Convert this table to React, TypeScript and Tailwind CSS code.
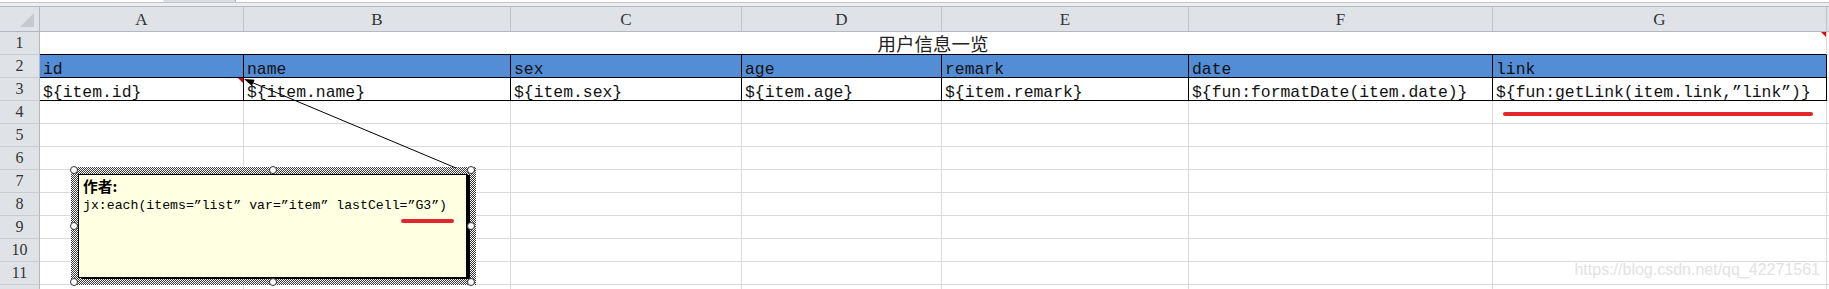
import React from "react";

const colW = [
  "w-[204px]",
  "w-[267px]",
  "w-[231px]",
  "w-[200px]",
  "w-[247px]",
  "w-[304px]",
  "w-[334px]",
];
const letters = ["A", "B", "C", "D", "E", "F", "G"];
const heads = ["id", "name", "sex", "age", "remark", "date", "link"];
const vals = [
  "${item.id}",
  "${item.name}",
  "${item.sex}",
  "${item.age}",
  "${item.remark}",
  "${fun:formatDate(item.date)}",
  "${fun:getLink(item.link,\u201Dlink\u201D)}",
];

function RowHead({ n }: { n: number }) {
  return (
    <div className="w-[40px] shrink-0 bg-[#dfe3e8] border-r border-b border-r-[#b4b8be] border-b-[#c9cdd2] flex items-center justify-center font-['Liberation_Serif',serif] text-[16px] text-[#333] leading-none">
      {n}
    </div>
  );
}

function EmptyRow({ n }: { n: number }) {
  return (
    <div className="flex h-[23px]">
      <RowHead n={n} />
      {colW.map((w, i) => (
        <div key={i} className={`${w} shrink-0 border-r border-b border-[#dadada]`} />
      ))}
      <div className="flex-1 border-b border-[#dadada]" />
    </div>
  );
}

export default function App() {
  return (
    <div className="relative w-[1829px] h-[289px] overflow-hidden bg-white font-['Liberation_Mono',monospace]">
      {/* top strip */}
      <div className="flex h-[3px] bg-white border-b border-[#c2c5ca]">
        <div className="w-[163px]" />
        <div className="w-[73px] h-[2px] bg-[#dcdee2] rounded-bl-[3px] border-r border-[#b9bdc3]" />
      </div>
      <div className="h-[4px] bg-[#eceef1] border-b border-[#b6bac0]" />

      {/* column header */}
      <div className="flex h-[25px] bg-[#dfe3e8]">
        <div className="w-[40px] shrink-0 border-r border-b border-[#b4b8be] flex items-center justify-center">
          <svg width="40" height="24" className="block">
            <polygon points="20,20 34,20 34,6" fill="#c6cace" />
          </svg>
        </div>
        {colW.map((w, i) => (
          <div
            key={i}
            className={`${w} shrink-0 border-r border-b border-r-[#bfc3c8] border-b-[#b4b8be] flex items-center justify-center font-['Liberation_Serif',serif] text-[17px] text-[#333] leading-none`}
          >
            {letters[i]}
          </div>
        ))}
        <div className="flex-1 border-b border-[#b4b8be]" />
      </div>

      {/* row 1 */}
      <div className="flex h-[23px]">
        <RowHead n={1} />
        <div className="w-[1787px] shrink-0 border-b border-r border-b-black border-r-[#dadada] flex items-center justify-center font-['Noto_Sans_CJK_SC',sans-serif] text-[18.5px] text-[#222] leading-none">
          用户信息一览
        </div>
        <div className="flex-1 border-b border-[#dadada]" />
      </div>

      {/* row 2 */}
      <div className="flex h-[23px]">
        <RowHead n={2} />
        {colW.map((w, i) => (
          <div
            key={i}
            className={`${w} shrink-0 bg-[#538dd5] border-r border-b border-black flex items-end px-[3px] text-[16.4px] leading-[15px] text-[#111] whitespace-nowrap`}
          >
            {heads[i]}
          </div>
        ))}
        <div className="flex-1 border-b border-[#dadada]" />
      </div>

      {/* row 3 */}
      <div className="flex h-[23px]">
        <RowHead n={3} />
        {colW.map((w, i) => (
          <div
            key={i}
            className={`${w} shrink-0 bg-white border-r border-b border-black flex items-end px-[3px] text-[16.4px] leading-[15px] text-[#111] whitespace-nowrap`}
          >
            {vals[i]}
          </div>
        ))}
        <div className="flex-1 border-b border-[#dadada]" />
      </div>

      {[4, 5, 6, 7, 8, 9, 10, 11].map((n) => (
        <EmptyRow key={n} n={n} />
      ))}
      <div className="flex h-[4px]">
        <div className="w-[40px] shrink-0 bg-[#dfe3e8] border-r border-[#b4b8be]" />
        {colW.map((w, i) => (
          <div key={i} className={`${w} shrink-0 border-r border-[#dadada]`} />
        ))}
      </div>

      {/* comment box */}
      <div className="absolute left-[71px] top-[167px] w-[405px] h-[118px] bg-[repeating-conic-gradient(#3a3a3a_0_25%,#ffffff_0_50%)] bg-[length:2px_2px] pl-[7px] pt-[7px]">
        <div className="w-[389px] h-[104px] bg-[#ffffe1] border border-black shadow-[3px_1px_0_#000] pl-[4px] pt-[1px]">
          <div className="font-['Noto_Sans_CJK_SC',sans-serif] font-bold text-[14.7px] leading-[20px] text-black">
            作者:
          </div>
          <div className="font-['Liberation_Mono',monospace] text-[13.2px] leading-[20px] text-black whitespace-nowrap">
            jx:each(items=”list” var=”item” lastCell=”G3”)
          </div>
        </div>
      </div>

      {/* arrow, indicators, handles */}
      <svg className="absolute left-0 top-0 pointer-events-none" width="1829" height="289">
        <line x1="456" y1="168" x2="251" y2="82" stroke="#000" strokeWidth="1" />
        <polygon points="244,79 251.9,86.1 254.6,79.7" fill="#000" />
        <polygon points="238,78 243,78 243,83" fill="#e80000" />
        <polygon points="1821,32 1826,32 1826,37" fill="#e80000" />
        {[
          [74, 170],
          [273, 170],
          [471, 170],
          [74, 226],
          [471, 226],
          [74, 282],
          [273, 282],
          [471, 282],
        ].map(([cx, cy], i) => (
          <circle key={i} cx={cx} cy={cy} r="3.5" fill="#fff" stroke="#333" strokeWidth="1" />
        ))}
      </svg>

      {/* red annotation underlines */}
      <div className="absolute left-[1503px] top-[112px] w-[310px] h-[4px] rounded-full bg-[#e3262b]" />
      <div className="absolute left-[401px] top-[219px] w-[53px] h-[4px] rounded-full bg-[#e3262b]" />

      {/* watermark */}
      <div className="absolute right-[9px] top-[262px] font-['Liberation_Sans',sans-serif] text-[16px] leading-none text-[#e2e2e2] whitespace-nowrap">
        https://blog.csdn.net/qq_42271561
      </div>
    </div>
  );
}
